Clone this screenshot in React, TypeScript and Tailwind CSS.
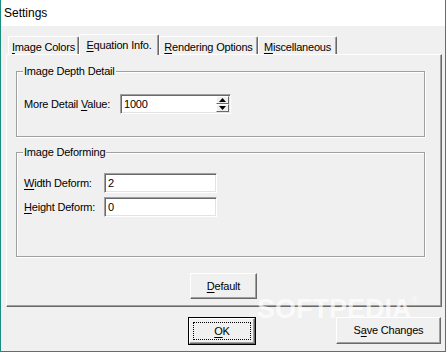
import React from "react";

const U = ({ c }: { c: string }) => <span className="underline underline-offset-[2px]">{c}</span>;

function Tab({ children, selected, w }: { children: React.ReactNode; selected?: boolean; w: string }) {
  return selected ? (
    <div
      className={`${w} h-[21px] -mb-[1px] relative z-10 bg-[#f0f0f0] border-t border-l border-white border-r border-r-[#696969] shadow-[inset_-1px_0_0_#a0a0a0] rounded-t-[2px] flex items-start justify-center pt-[2px]`}
    >
      {children}
    </div>
  ) : (
    <div
      className={`${w} h-[18px] bg-[#f0f0f0] border-t border-l border-white border-r border-r-[#696969] shadow-[inset_-1px_0_0_#a0a0a0] rounded-t-[2px] flex items-start justify-center pt-[2px]`}
    >
      {children}
    </div>
  );
}

function Group({ title, h, children }: { title: string; h: string; children: React.ReactNode }) {
  return (
    <div className={`relative w-[409px] ${h} border border-[#a0a0a0] shadow-[inset_1px_1px_0_#fff,1px_1px_0_#fff]`}>
      <span className="absolute -top-[8px] left-[6px] bg-[#f0f0f0] px-[1px] leading-[14px]">{title}</span>
      {children}
    </div>
  );
}

function Edit({ value, w }: { value: string; w: string }) {
  return (
    <div
      className={`${w} h-[20px] bg-white border border-t-[#a0a0a0] border-l-[#a0a0a0] border-r-white border-b-white shadow-[inset_1px_1px_0_#696969,inset_-1px_-1px_0_#e3e3e3] flex items-center pl-[3px]`}
    >
      {value}
    </div>
  );
}

function Arrow({ up }: { up?: boolean }) {
  return (
    <div className="w-[13px] h-[8px] bg-[#f0f0f0] border border-t-white border-l-white border-r-[#696969] border-b-[#696969] flex items-center justify-center">
      <svg width="7" height="4" viewBox="0 0 7 4">
        {up ? <path d="M3.5 0 L7 4 L0 4 Z" fill="#000" /> : <path d="M0 0 L7 0 L3.5 4 Z" fill="#000" />}
      </svg>
    </div>
  );
}

function Raised({ children, className }: { children: React.ReactNode; className?: string }) {
  return (
    <div
      className={`bg-[#f0f0f0] border border-t-white border-l-white border-r-[#696969] border-b-[#696969] shadow-[inset_-1px_-1px_0_#a0a0a0] flex items-center justify-center ${className ?? ""}`}
    >
      {children}
    </div>
  );
}

export default function App() {
  return (
    <div className="w-[446px] h-[352px] flex flex-col border-x border-b border-[#1b8f7f] bg-[#f0f0f0] font-['Liberation_Sans',Arial,sans-serif] text-black text-[11px] tracking-[-0.2px] overflow-hidden">
      <div className="h-[26px] shrink-0 bg-white flex items-center pl-[3px] text-[12px] tracking-normal">Settings</div>
      <div className="flex-1 flex flex-col pl-[5px] pt-[8px] relative">
        <div className="flex items-end h-[20px] pl-[2px]">
          <Tab w="w-[71px]">
            <span><U c="I" />mage Colors</span>
          </Tab>
          <Tab w="w-[80px]" selected>
            <span><U c="E" />quation Info.</span>
          </Tab>
          <Tab w="w-[99px]">
            <span><U c="R" />endering Options</span>
          </Tab>
          <Tab w="w-[79px]">
            <span><U c="M" />iscellaneous</span>
          </Tab>
        </div>
        <div className="w-[436px] h-[253px] border border-t-white border-l-white border-r-[#696969] border-b-[#696969]">
          <div className="w-full h-full border-r border-b border-[#a0a0a0] flex flex-col pl-[9px] pt-[16px]">
            <div className="flex flex-col gap-[15px]">
              <Group title="Image Depth Detail" h="h-[66px]">
                <div className="flex items-center pl-[7px] pt-[22px]">
                  <span className="w-[96px]">More Detail <U c="V" />alue:</span>
                  <div className="relative w-[111px] h-[20px] bg-white border border-t-[#a0a0a0] border-l-[#a0a0a0] border-r-white border-b-white shadow-[inset_1px_1px_0_#696969,inset_-1px_-1px_0_#e3e3e3] flex items-center pl-[3px]">
                    <span className="flex-1">1000</span>
                    <div className="flex flex-col mr-[1px]">
                      <Arrow up />
                      <Arrow />
                    </div>
                  </div>
                </div>
              </Group>
              <Group title="Image Deforming" h="h-[105px]">
                <div className="flex flex-col gap-[4px] pl-[7px] pt-[20px]">
                  <div className="flex items-center">
                    <span className="w-[80px]"><U c="W" />idth Deform:</span>
                    <Edit value="2" w="w-[113px]" />
                  </div>
                  <div className="flex items-center">
                    <span className="w-[80px]"><U c="H" />eight Deform:</span>
                    <Edit value="0" w="w-[113px]" />
                  </div>
                </div>
              </Group>
            </div>
            <div className="flex justify-center pr-[9px] mt-[16px]">
              <Raised className="w-[67px] h-[26px]">
                <span><U c="D" />efault</span>
              </Raised>
            </div>
          </div>
        </div>
        <div className="w-[436px] flex justify-end gap-[80px] pr-[1px] mt-[10px]">
          <div className="w-[68px] h-[28px] border border-black">
            <Raised className="w-full h-full p-[3px]">
              <div className="w-full h-full border border-dotted border-black flex items-center justify-center">
                <span><U c="O" />K</span>
              </div>
            </Raised>
          </div>
          <Raised className="w-[105px] h-[27px]">
            <span>S<U c="a" />ve Changes</span>
          </Raised>
        </div>
        <div className="absolute left-[256px] top-[270px] text-[27px] leading-none font-bold text-white/70 tracking-normal pointer-events-none font-['Liberation_Sans',Arial,sans-serif]">
          SOFTPEDIA<span className="text-[9px] font-normal align-top">®</span>
        </div>
      </div>
    </div>
  );
}
